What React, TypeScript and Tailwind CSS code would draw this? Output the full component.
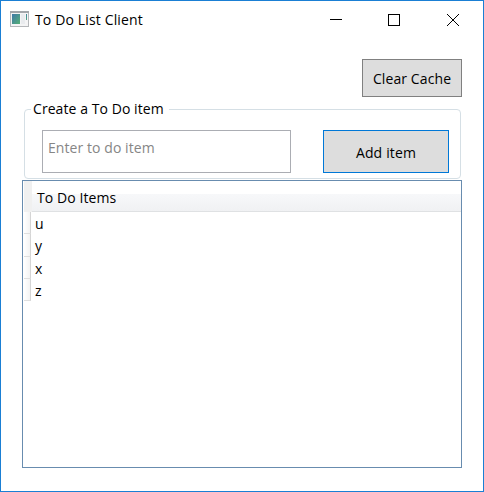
const items = ['u', 'y', 'x', 'z'];

function AppIcon() {
  return (
    <svg width="19" height="16" viewBox="0 0 19 16" shapeRendering="crispEdges">
      <defs>
        <linearGradient id="pane" x1="0" y1="0" x2="1" y2="1">
          <stop offset="0" stopColor="#3f78a8" />
          <stop offset="1" stopColor="#55b076" />
        </linearGradient>
      </defs>
      <rect x="0.5" y="0.5" width="18" height="15" fill="#f4f4f5" stroke="#b5b7ba" />
      <rect x="0" y="0" width="19" height="2" fill="#a3a6aa" />
      <rect x="2" y="3" width="8" height="10" fill="url(#pane)" />
      <rect x="11" y="3" width="4" height="10" fill="#e9ebee" />
      <rect x="16" y="3" width="1" height="6" fill="url(#pane)" />
    </svg>
  );
}

function TitleBar() {
  return (
    <header className="flex h-[37px] pt-[10px] pl-[9px] pr-[24px]">
      <AppIcon />
      <h1 className="ml-[6px] h-[18px] text-[14px] leading-[18px] tracking-[0.14px]">To Do List Client</h1>
      <svg className="ml-auto mt-px" width="130" height="14" viewBox="0 0 130 14" fill="none" stroke="#000">
        <path d="M1 7.5h12" shapeRendering="crispEdges" />
        <rect x="59.5" y="2.5" width="11" height="11" shapeRendering="crispEdges" />
        <path d="M118 2l12 12M130 2l-12 12" />
      </svg>
    </header>
  );
}

export default function App() {
  return (
    <main className="flex h-[492px] w-[484px] flex-col border border-[#1a7fd4] bg-white font-['Open_Sans','Noto_Sans',sans-serif] text-[14px] leading-[18px] text-black">
      <TitleBar />
      <div className="mt-[21px] mr-[21px] flex h-[38px] justify-end">
        <button className="h-[38px] w-[100px] whitespace-nowrap border border-[#808080] bg-[#ddd] pt-[2px] tracking-[0.1px]">Clear Cache</button>
      </div>
      <fieldset className="mt-[4px] ml-[23px] h-[78px] w-[437px] rounded-[4px] border border-[#d5dfe5] px-[6px]">
        <legend className="h-[16px] pr-[5px] pl-[2px] leading-[16px] tracking-[0.07px]">Create a To Do item</legend>
        <div className="mt-[13px] ml-[11px] flex gap-[32px]">
          <input
            className="h-[43px] w-[249px] shrink-0 border border-[#abadb3] px-[5px] pb-[9px] tracking-[0.07px] outline-none placeholder:text-[#868686]"
            placeholder="Enter to do item"
          />
          <button className="h-[43px] w-[126px] shrink-0 border border-[#0078d7] bg-[#ddd] pt-[2px] tracking-[0.15px]">Add item</button>
        </div>
      </fieldset>
      <section className="mt-px ml-[21px] h-[288px] w-[440px] border border-[#688caf] pl-px">
        <div className="flex h-[31px]">
          <div className="w-[8px] bg-[#f0f0f0]" />
          <div className="grow border-b border-[#dfe1e3] bg-[linear-gradient(#fff_0px,#fff_13px,#f7f8fa_13px,#f0f1f3_30px)] pt-[8px] pl-[5px] tracking-[0.08px]">To Do Items</div>
        </div>
        <ul>
          {items.map((item) => (
            <li key={item} className="flex h-[22.3px]">
              <div className="w-[7px] border-r border-b border-r-[#d5d5d5] border-b-[#dfdfdf] bg-linear-to-r from-white to-[#f3f3f3]" />
              <span className="pt-[3px] pl-[4px]">{item}</span>
            </li>
          ))}
        </ul>
      </section>
    </main>
  );
}
